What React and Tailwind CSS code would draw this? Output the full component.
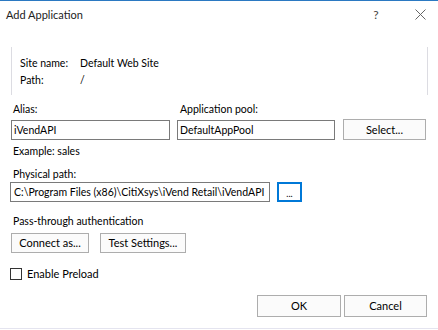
export default function App() {
  const btn =
    "border border-[#adadad] bg-[#fbfbfb] flex items-center justify-center text-black";
  const input =
    "h-[20px] border border-[#7a7a7a] bg-white flex items-center pl-[2px] text-black whitespace-nowrap overflow-hidden";
  return (
    <div
      className="w-[438px] h-[330px] bg-white overflow-hidden flex flex-col text-[10.5px] leading-[14px] text-black"
      style={{ fontFamily: 'Lato, "Noto Sans", sans-serif' }}
    >
      <div className="h-[1px] bg-[#2b79c2] shrink-0" />
      {/* title bar */}
      <div className="h-[27px] flex items-center shrink-0">
        <div className="pl-[6px] text-[11px] text-[#222]">Add Application</div>
        <div className="ml-auto w-[12px] text-center text-[12px] text-[#444] mr-[31px]">?</div>
        <div className="w-[14px] mr-[11px] flex justify-center">
          <svg width="11" height="11" viewBox="0 0 11 11">
            <path d="M0.5 0.5L10.5 10.5M10.5 0.5L0.5 10.5" stroke="#666" strokeWidth="1" />
          </svg>
        </div>
      </div>
      {/* site box */}
      <div className="mt-[19px] ml-[11px] mr-[10px] h-[48px] border-l border-r border-[#dcdce2] pl-[8px] pt-[7px] flex flex-col">
        <div className="flex h-[17px] items-center">
          <span className="w-[60px]">Site name:</span>
          <span>Default Web Site</span>
        </div>
        <div className="flex h-[17px] items-center">
          <span className="w-[60px]">Path:</span>
          <span>/</span>
        </div>
      </div>
      {/* alias / pool */}
      <div className="flex mt-[7px] pl-[13px]">
        <div className="w-[167px]">Alias:</div>
        <div>Application pool:</div>
      </div>
      <div className="flex mt-[3px] items-center">
        <div className={input + " ml-[11px] w-[159px]"}>iVendAPI</div>
        <div className={input + " ml-[7px] w-[158px]"}>DefaultAppPool</div>
        <div className={btn + " ml-[8px] w-[83px] h-[21px] text-[11px]"}>Select...</div>
      </div>
      <div className="mt-[4px] pl-[13px]">Example: sales</div>
      <div className="mt-[9px] pl-[13px]">Physical path:</div>
      <div className="flex mt-[1px] items-center">
        <div className={input + " ml-[10px] w-[260px] pl-[3px]"}>
          C:\Program Files (x86)\CitiXsys\iVend Retail\iVendAPI
        </div>
        <div className="ml-[7px] w-[25px] h-[20px] border-2 border-[#0078d7] bg-white flex items-center justify-center text-[9px] leading-none pt-[2px]">
          ...
        </div>
      </div>
      <div className="mt-[12px] pl-[13px]">Pass-through authentication</div>
      <div className="flex mt-[5px]">
        <div className={btn + " ml-[11px] w-[78px] h-[20px] text-[11px]"}>Connect as...</div>
        <div className={btn + " ml-[11px] w-[86px] h-[20px] text-[11px]"}>Test Settings...</div>
      </div>
      <div className="flex items-center mt-[15px] pl-[10px] h-[12px]">
        <div className="w-[12px] h-[12px] border border-[#333] bg-white" />
        <span className="ml-[5px] text-[11px]">Enable Preload</span>
      </div>
      <div className="flex mt-[15px] justify-end pr-[11px]">
        <div className={btn + " w-[84px] h-[22px] text-[11px]"}>OK</div>
        <div className={btn + " ml-[3px] w-[83px] h-[22px] text-[11px]"}>Cancel</div>
      </div>
      <div className="mt-auto mb-[1px] h-[1px] bg-[#e4e4ef]" />
    </div>
  );
}
